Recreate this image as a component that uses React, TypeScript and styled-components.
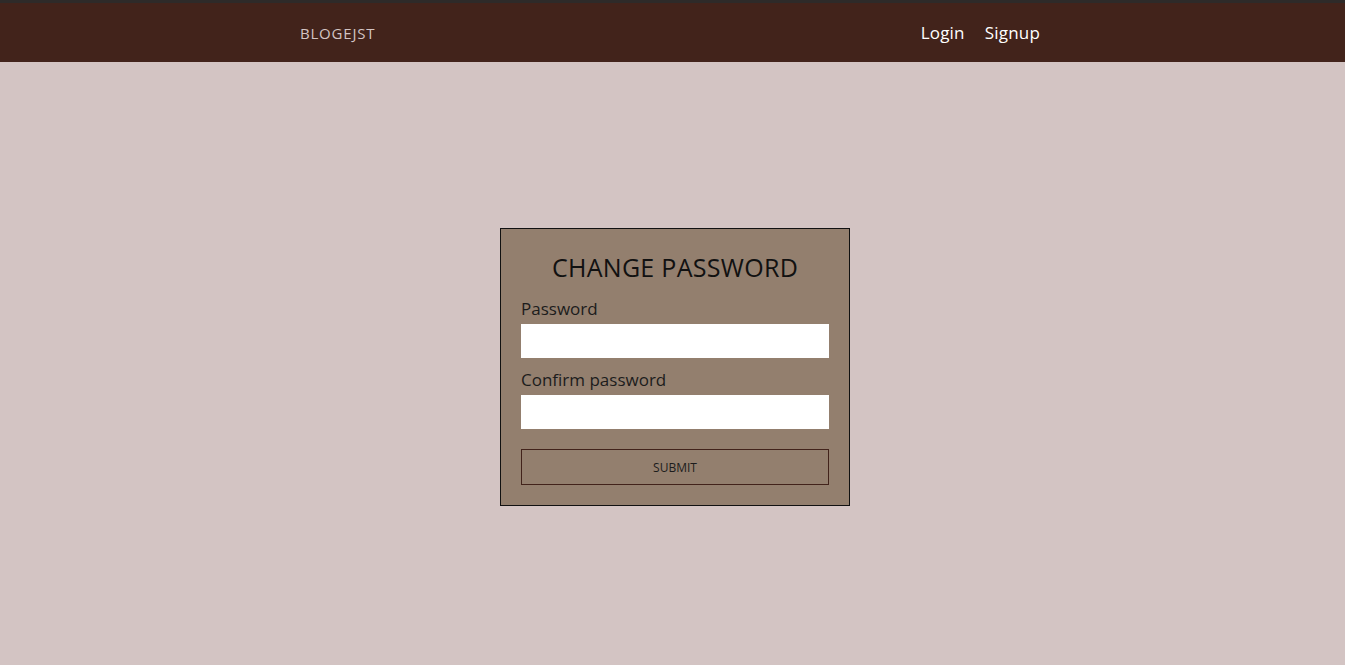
import React from "react";
import styled, { createGlobalStyle } from "styled-components";

const Global = createGlobalStyle`
  html, body { margin: 0; padding: 0; }
  body {
    font-family: "Open Sans", "Liberation Sans", sans-serif;
    background: #d3c4c3;
  }
  * { box-sizing: border-box; }
`;

const Page = styled.div`
  min-height: 665px;
  display: flex;
  flex-direction: column;
  background: #d3c4c3;
  border-top: 3px solid #2e2a29;
`;

const Nav = styled.nav`
  height: 59px;
  background: #42231b;
  display: flex;
  align-items: center;
  justify-content: space-between;
  padding: 0 305px 0 300px;
`;

const Brand = styled.a`
  color: #d3c4c3;
  font-size: 15px;
  text-decoration: none;
  letter-spacing: 0.8px;
`;

const NavLinks = styled.div`
  display: flex;
  gap: 20px;
`;

const NavLink = styled.a`
  color: #ffffff;
  font-size: 17px;
  text-decoration: none;
  letter-spacing: 0.2px;
`;

const Main = styled.main`
  flex: 1;
  display: flex;
  align-items: flex-start;
  justify-content: center;
  padding-left: 5px;
  padding-top: 166px;
`;

const Card = styled.form`
  width: 350px;
  background: #937f6e;
  border: 1px solid #111;
  padding: 21px 20px 20px;
  display: flex;
  flex-direction: column;
`;

const Title = styled.h2`
  margin: 0 0 13px;
  font-weight: 400;
  font-size: 25px;
  text-align: center;
  color: #111;
  line-height: 34px;
  letter-spacing: 0.3px;
`;

const Label = styled.label`
  font-size: 17px;
  color: #1c1c1c;
  line-height: 24px;
  margin-bottom: 3px;
`;

const Input = styled.input`
  height: 34px;
  border: none;
  background: #fff;
  margin-bottom: 10px;
  outline: none;
`;

const Button = styled.button`
  margin-top: 10px;
  height: 36px;
  background: transparent;
  border: 1px solid #42231b;
  font-family: inherit;
  font-size: 12px;
  color: #1c1c1c;
`;

export default function App() {
  return (
    <>
      <Global />
      <Page>
        <Nav>
          <Brand href="#">BLOGEJST</Brand>
          <NavLinks>
            <NavLink href="#">Login</NavLink>
            <NavLink href="#">Signup</NavLink>
          </NavLinks>
        </Nav>
        <Main>
          <Card onSubmit={(e) => e.preventDefault()}>
            <Title>CHANGE PASSWORD</Title>
            <Label>Password</Label>
            <Input type="password" />
            <Label>Confirm password</Label>
            <Input type="password" />
            <Button type="submit">SUBMIT</Button>
          </Card>
        </Main>
      </Page>
    </>
  );
}
